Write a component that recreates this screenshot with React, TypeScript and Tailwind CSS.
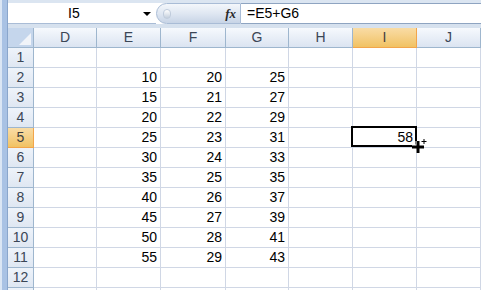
import React from "react";

const cols = ["D", "E", "F", "G", "H", "I", "J"];
const widths = [63, 64, 65, 63, 64, 64, 64];

const data: Record<number, (string | null)[]> = {
  2: [null, "10", "20", "25", null, null, null],
  3: [null, "15", "21", "27", null, null, null],
  4: [null, "20", "22", "29", null, null, null],
  5: [null, "25", "23", "31", null, "58", null],
  6: [null, "30", "24", "33", null, null, null],
  7: [null, "35", "25", "35", null, null, null],
  8: [null, "40", "26", "37", null, null, null],
  9: [null, "45", "27", "39", null, null, null],
  10: [null, "50", "28", "41", null, null, null],
  11: [null, "55", "29", "43", null, null, null],
};

const rows = Array.from({ length: 13 }, (_, i) => i + 1);

const FormulaBar = () => (
  <div className="flex h-[21px] shrink-0 bg-white">
    <div className="w-[148px] flex items-center relative border-b border-[#a9bcd6]">
      <span className="pl-[60px] text-[14px] text-black">I5</span>
      <span className="absolute left-[135px] top-[9px] w-0 h-0 border-l-[4px] border-r-[4px] border-t-[4px] border-l-transparent border-r-transparent border-t-black" />
    </div>
    <div className="w-[85px] h-[21px] rounded-l-full bg-gradient-to-b from-[#f4f7fb] via-[#dfe7f2] to-[#c7d4e6] border border-[#a9bcd6] flex items-center justify-between pl-[6px] pr-[4px]">
      <span className="w-[8px] h-[10px] rounded-full bg-gradient-to-b from-[#ffffff] to-[#c4cfdd] border border-[#c0ccdc]" />
      <span className="italic text-[13px] text-[#2a2a2a] [font-family:'Liberation_Serif',serif] font-bold">fx</span>
    </div>
    <div className="flex-1 flex items-center border-t border-b border-[#8ea4c1] pl-[6px] text-[14px] text-black">
      =E5+G6
    </div>
  </div>
);

const App = () => {
  return (
    <div className="w-[481px] h-[290px] overflow-hidden bg-white relative flex [font-family:'Liberation_Sans',Arial,sans-serif]">
      <div className="w-[8px] h-full flex shrink-0">
        <div className="w-[2px] bg-[#dbe6f4]" />
        <div className="w-[5px] bg-[#a9c2e4]" />
        <div className="w-[1px] bg-[#8aa6cc]" />
      </div>
      <div className="flex-1 flex flex-col">
        <div className="h-[3px] shrink-0 bg-[#dbe5f1]" />
        <FormulaBar />
        <div className="h-[4px] shrink-0 bg-[#d6e1ee]" />
        <div className="flex h-[20px] shrink-0">
          <div className="w-[26px] shrink-0 bg-[#c5d6ec] border-r border-b border-[#9eb6ce] relative">
            <span className="absolute right-[2px] bottom-[2px] w-0 h-0 border-l-[12px] border-b-[12px] border-l-transparent border-b-[#f1f4f9]" />
          </div>
          {cols.map((c, i) => (
            <div
              key={c}
              style={{ width: widths[i] }}
              className={
                c === "I"
                  ? "shrink-0 flex items-center justify-center text-[14px] text-[#3f3f3f] bg-gradient-to-b from-[#f9dca5] to-[#f1c262] border-r border-b border-[#f2a54b]"
                  : "shrink-0 flex items-center justify-center text-[14px] text-[#3b4656] bg-gradient-to-b from-[#f6f9fd] to-[#dbe4f1] border-r border-b border-[#9eb6ce]"
              }
            >
              {c}
            </div>
          ))}
        </div>
        {rows.map((r) => (
          <div key={r} className="flex h-[20px] shrink-0">
            <div
              className={
                r === 5
                  ? "w-[26px] shrink-0 flex items-center justify-center text-[14px] text-[#3f3f3f] bg-gradient-to-b from-[#f9dca5] to-[#f1c262] border-r border-b border-[#f2a54b]"
                  : "w-[26px] shrink-0 flex items-center justify-center text-[14px] text-[#3b4656] bg-gradient-to-b from-[#eef3fa] to-[#dfe7f2] border-r border-b border-[#9eb6ce]"
              }
            >
              {r < 13 ? r : null}
            </div>
            {cols.map((c, i) => {
              const v = data[r]?.[i] ?? null;
              const sel = r === 5 && c === "I";
              return (
                <div
                  key={c}
                  style={{ width: widths[i] }}
                  className="shrink-0 border-r border-b border-[#d0d7e5] flex items-center justify-end pr-[3px] text-[14px] text-black relative"
                >
                  {v}
                  {sel && (
                    <span className="absolute left-[-2px] top-[-2px] w-[66px] h-[21px] border-2 border-black" />
                  )}
                </div>
              );
            })}
          </div>
        ))}
      </div>
      <svg className="absolute left-[408px] top-[136px]" width="22" height="20" viewBox="0 0 22 20">
        <path d="M10 5v12M4 11h12" stroke="white" strokeWidth="5" />
        <path d="M10 5v12M4 11h12" stroke="black" strokeWidth="3" />
        <path d="M16 3v5M13.5 5.5h5" stroke="black" strokeWidth="1" />
      </svg>
    </div>
  );
};

export default App;
